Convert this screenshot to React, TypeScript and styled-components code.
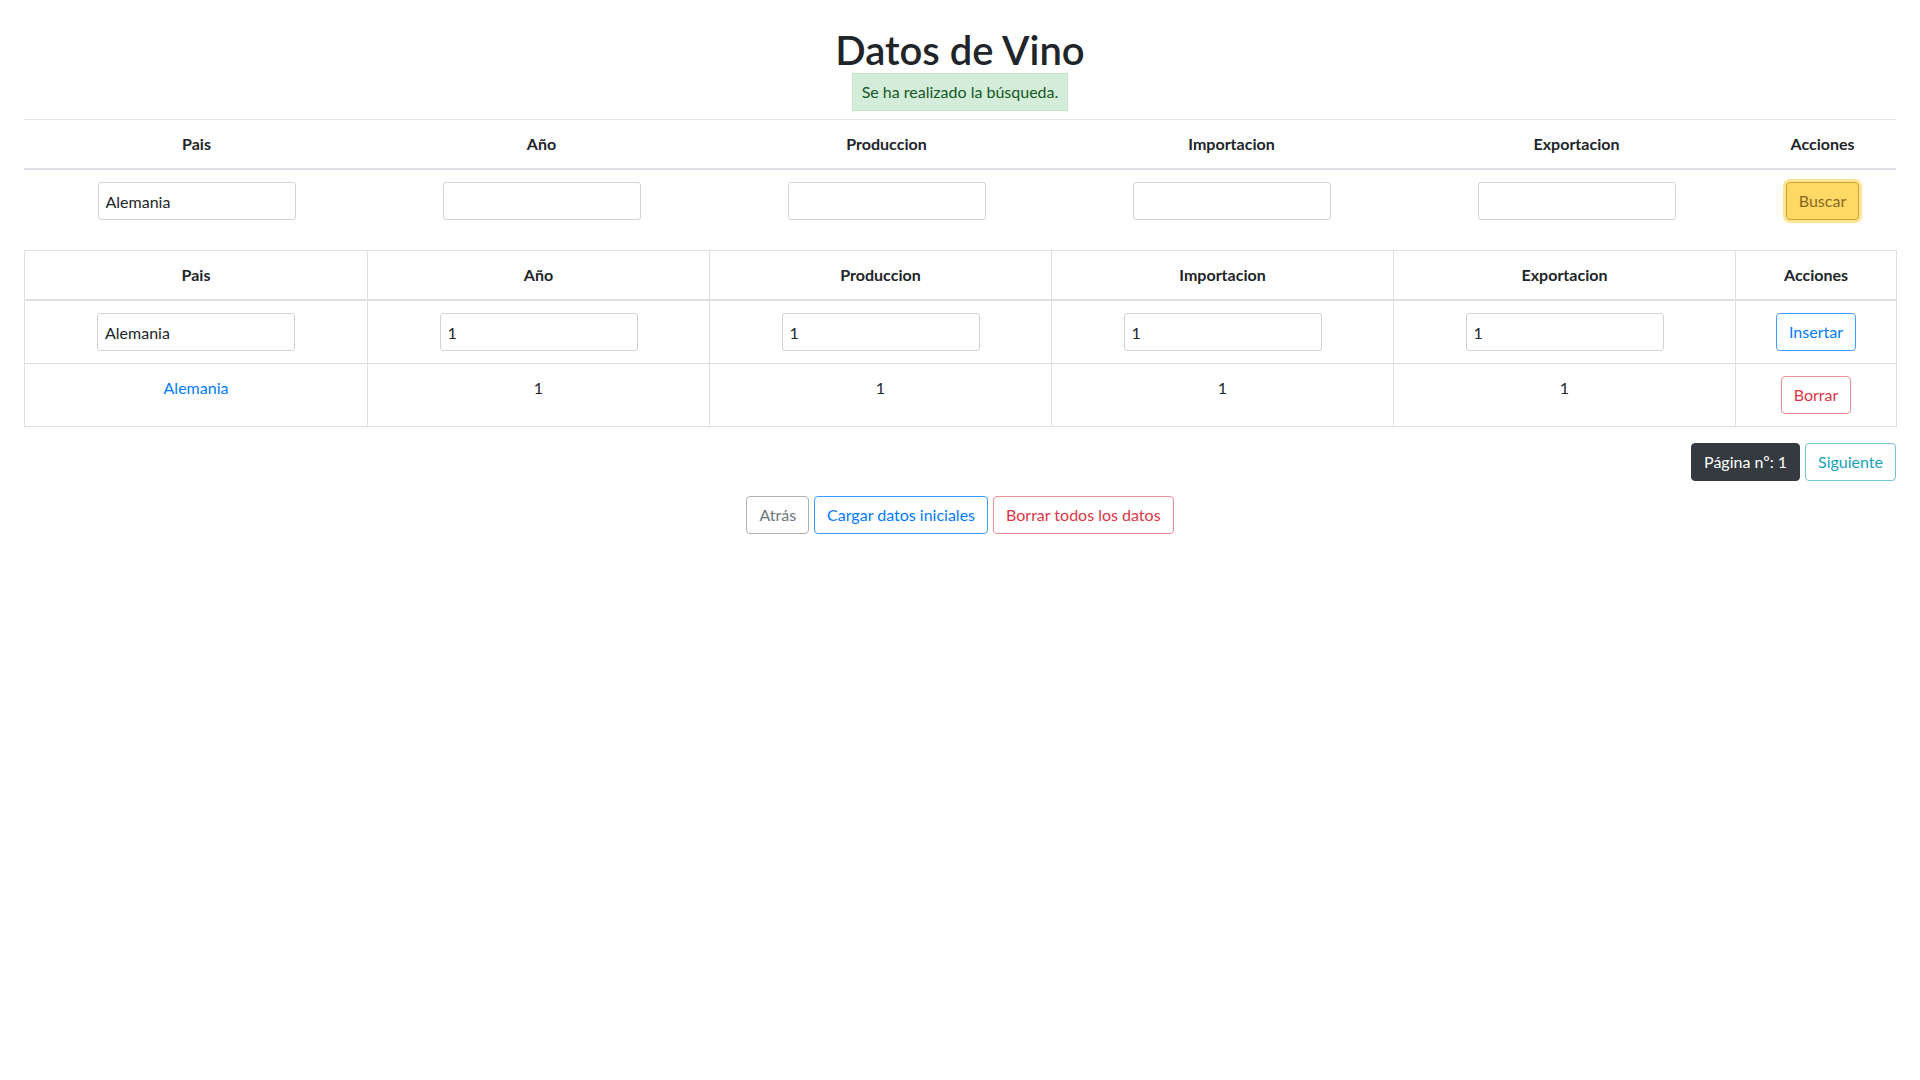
import React from 'react';
import styled, { createGlobalStyle, css } from 'styled-components';

const GlobalStyle = createGlobalStyle`
  body {
    margin: 0;
    background: #fff;
    color: #212529;
    font-family: Lato, "Noto Sans", "Liberation Sans", sans-serif;
    font-size: 16px;
    line-height: 1.5;
  }
  * {
    box-sizing: border-box;
  }
`;

const Page = styled.div`
  padding: 0 24px;
`;

const Header = styled.header`
  text-align: center;
`;

const Title = styled.h1`
  margin: 26px 0 0;
  font-size: 40px;
  font-weight: 600;
  line-height: 48px;
  color: #212529;
`;

const Alert = styled.div`
  display: inline-block;
  margin-top: -1px;
  padding: 6px 9px;
  border: 1px solid #c3e6cb;
  background: #d4edda;
  color: #155724;
  line-height: 24px;
`;

const Table = styled.table<{ $bordered?: boolean }>`
  width: 100%;
  margin: 0 0 16px;
  border-collapse: collapse;
  table-layout: fixed;

  th,
  td {
    padding: 12px;
    text-align: center;
    vertical-align: top;
    border-top: 1px solid #dee2e6;
    ${({ $bordered }) =>
      $bordered &&
      css`
        border: 1px solid #dee2e6;
      `}
  }

  th {
    font-weight: 700;
  }

  thead th {
    border-bottom: 2px solid #dee2e6;
  }
`;

const SearchTable = styled(Table)`
  margin: 8px 0 18px;

  tbody td {
    border-top: none;
  }
`;

const Col = styled.col<{ $w: number }>`
  width: ${({ $w }) => $w}px;
`;

const Field = styled.input`
  width: 198px;
  height: 38px;
  padding: 0 7px;
  border: 1px solid #ced4da;
  border-radius: 3px;
  font: inherit;
  color: #212529;
  background: #fff;
  outline: none;
`;

const variants = {
  search: css`
    background: #ffd966;
    border-color: #c9a233;
    color: #86691f;
    box-shadow: 0 0 0 3px rgba(255, 205, 60, 0.55);
  `,
  primary: css`
    background: #fff;
    border-color: #3d9bff;
    color: #007bff;
  `,
  danger: css`
    background: #fff;
    border-color: #ec8c96;
    color: #dc3545;
  `,
  secondary: css`
    background: #fff;
    border-color: #aeb2b6;
    color: #6c757d;
  `,
  info: css`
    background: #fff;
    border-color: #6fc6d4;
    color: #17a2b8;
  `,
  dark: css`
    background: #343a40;
    border-color: #343a40;
    color: #fff;
  `,
};

type Variant = keyof typeof variants;

const Button = styled.button<{ $variant: Variant }>`
  display: inline-block;
  height: 38px;
  padding: 6px 12px;
  border: 1px solid;
  border-radius: 4px;
  font: inherit;
  line-height: 24px;
  cursor: pointer;
  ${({ $variant }) => variants[$variant]}
`;

const Link = styled.a`
  color: #007bff;
  text-decoration: none;
`;

const Pager = styled.div`
  display: flex;
  justify-content: flex-end;
  gap: 5px;
`;

const Footer = styled.div`
  display: flex;
  justify-content: center;
  gap: 5px;
  margin-top: 15px;
`;

const columns = ['Pais', 'Año', 'Produccion', 'Importacion', 'Exportacion', 'Acciones'];
const searchWidths = [345, 345, 345, 345, 345, 147];
const dataWidths = [343, 342, 342, 342, 342, 161];

const rows = [{ pais: 'Alemania', anyo: 1, produccion: 1, importacion: 1, exportacion: 1 }];

function App() {
  return (
    <>
      <GlobalStyle />
      <Page>
        <Header>
          <Title>Datos de Vino</Title>
          <Alert>Se ha realizado la búsqueda.</Alert>
        </Header>

        <SearchTable>
          <colgroup>
            {searchWidths.map((w, i) => (
              <Col key={i} $w={w} />
            ))}
          </colgroup>
          <thead>
            <tr>
              {columns.map((c) => (
                <th key={c}>{c}</th>
              ))}
            </tr>
          </thead>
          <tbody>
            <tr>
              <td>
                <Field defaultValue="Alemania" />
              </td>
              <td>
                <Field />
              </td>
              <td>
                <Field />
              </td>
              <td>
                <Field />
              </td>
              <td>
                <Field />
              </td>
              <td>
                <Button $variant="search">Buscar</Button>
              </td>
            </tr>
          </tbody>
        </SearchTable>

        <Table $bordered>
          <colgroup>
            {dataWidths.map((w, i) => (
              <Col key={i} $w={w} />
            ))}
          </colgroup>
          <thead>
            <tr>
              {columns.map((c) => (
                <th key={c}>{c}</th>
              ))}
            </tr>
          </thead>
          <tbody>
            <tr>
              <td>
                <Field defaultValue="Alemania" />
              </td>
              <td>
                <Field defaultValue="1" />
              </td>
              <td>
                <Field defaultValue="1" />
              </td>
              <td>
                <Field defaultValue="1" />
              </td>
              <td>
                <Field defaultValue="1" />
              </td>
              <td>
                <Button $variant="primary">Insertar</Button>
              </td>
            </tr>
            {rows.map((r) => (
              <tr key={r.pais}>
                <td>
                  <Link href="#">{r.pais}</Link>
                </td>
                <td>{r.anyo}</td>
                <td>{r.produccion}</td>
                <td>{r.importacion}</td>
                <td>{r.exportacion}</td>
                <td>
                  <Button $variant="danger">Borrar</Button>
                </td>
              </tr>
            ))}
          </tbody>
        </Table>

        <Pager>
          <Button $variant="dark">Página nº: 1</Button>
          <Button $variant="info">Siguiente</Button>
        </Pager>

        <Footer>
          <Button $variant="secondary">Atrás</Button>
          <Button $variant="primary">Cargar datos iniciales</Button>
          <Button $variant="danger">Borrar todos los datos</Button>
        </Footer>
      </Page>
    </>
  );
}

export default App;
